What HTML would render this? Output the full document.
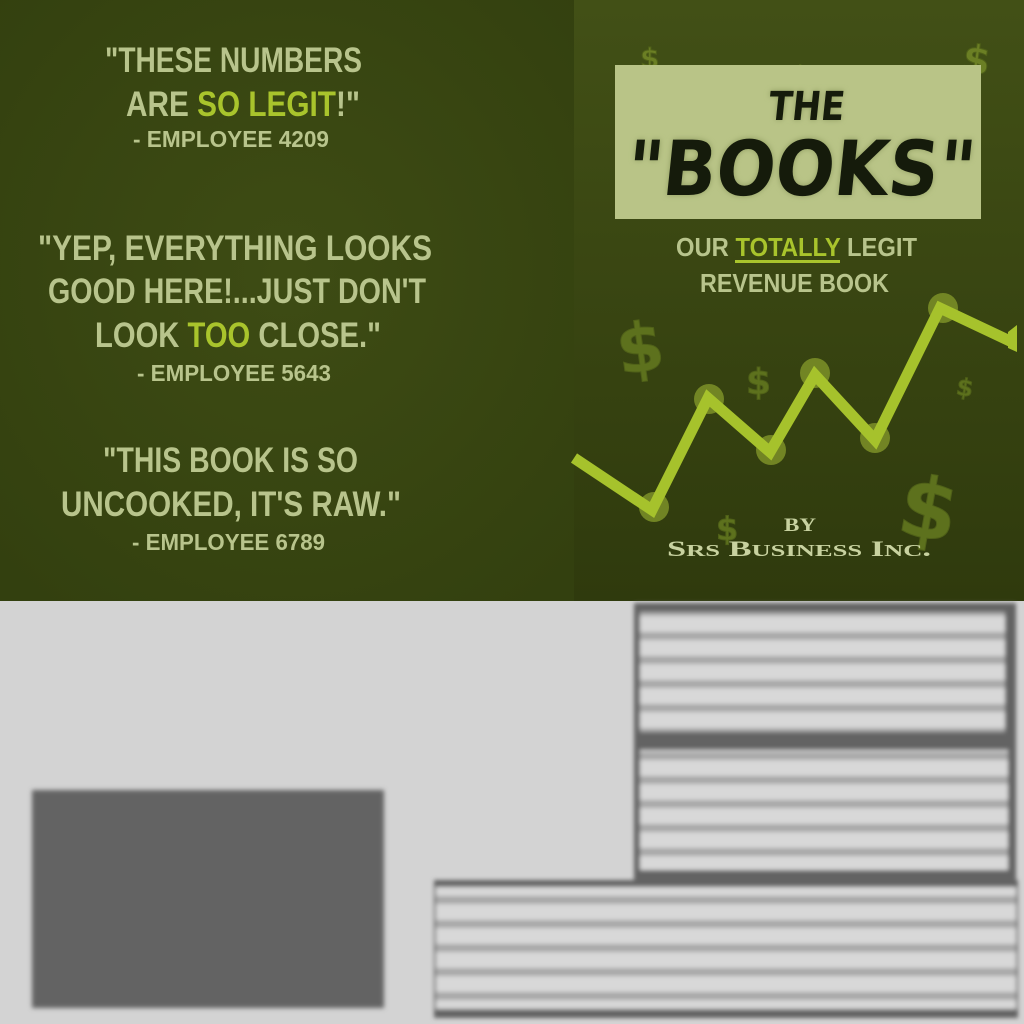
<!DOCTYPE html>
<html><head><meta charset="utf-8"><style>
html,body{margin:0;padding:0;background:#d3d3d3;}
svg{display:block}
</style></head><body>
<svg width="1024" height="1024" viewBox="0 0 1024 1024" xmlns="http://www.w3.org/2000/svg">
<defs>
<linearGradient id="g" x1="0" y1="0" x2="0" y2="1">
<stop offset="0" stop-color="#425016"/><stop offset="1" stop-color="#2f3a0d"/>
</linearGradient>
<radialGradient id="lg" cx="0.5" cy="0.45" r="0.7">
<stop offset="0" stop-color="#3e4c14"/><stop offset="1" stop-color="#33400f"/>
</radialGradient>
<filter id="b1"><feGaussianBlur stdDeviation="2.5"/></filter>
<filter id="b2"><feGaussianBlur stdDeviation="2"/></filter>
<filter id="glow"><feGaussianBlur stdDeviation="3"/></filter>
<pattern id="stripes" width="20" height="24" patternUnits="userSpaceOnUse">
<rect width="20" height="24" fill="#d8d8d8"/>
<rect y="8" width="20" height="8" fill="#a8a8a8"/>
</pattern>
</defs>
<rect width="1024" height="601" fill="url(#g)"/>
<rect width="574" height="601" fill="url(#lg)"/>
<rect x="0" y="601" width="1024" height="423" fill="#d3d3d3"/>

<g font-family="Liberation Sans, sans-serif" font-weight="bold" fill="#b8c48c">
<text x="105" y="72" font-size="35" textLength="257" lengthAdjust="spacingAndGlyphs">"THESE NUMBERS</text>
<text x="126" y="116" font-size="35" textLength="234" lengthAdjust="spacingAndGlyphs">ARE <tspan fill="#a9c42c">SO LEGIT</tspan>!"</text>
<text x="133" y="147" font-size="23" textLength="196" lengthAdjust="spacingAndGlyphs">- EMPLOYEE 4209</text>
<text x="38" y="260" font-size="35" textLength="394" lengthAdjust="spacingAndGlyphs">"YEP, EVERYTHING LOOKS</text>
<text x="48" y="303" font-size="35" textLength="378" lengthAdjust="spacingAndGlyphs">GOOD HERE!...JUST DON'T</text>
<text x="95" y="347" font-size="35" textLength="286" lengthAdjust="spacingAndGlyphs">LOOK <tspan fill="#a9c42c">TOO</tspan> CLOSE."</text>
<text x="137" y="381" font-size="23" textLength="194" lengthAdjust="spacingAndGlyphs">- EMPLOYEE 5643</text>
<text x="103" y="472" font-size="35" textLength="255" lengthAdjust="spacingAndGlyphs">"THIS BOOK IS SO</text>
<text x="61" y="516" font-size="35" textLength="340" lengthAdjust="spacingAndGlyphs">UNCOOKED, IT'S RAW."</text>
<text x="132" y="550" font-size="23" textLength="193" lengthAdjust="spacingAndGlyphs">- EMPLOYEE 6789</text>
</g>

<g font-family="DejaVu Sans, sans-serif" font-weight="bold" fill="#5d711d" stroke="#4f6018" stroke-width="1">
<text x="616" y="372" font-size="68" transform="rotate(-8 637 345)">$</text>
<text x="746" y="394" font-size="36">$</text>
<text x="957" y="396" font-size="24" transform="rotate(10 966 385)">$</text>
<text x="640" y="68" font-size="28" fill="#6b7f24">$</text>
<text x="795" y="76" font-size="15" fill="#6b7f24">$</text>
<text x="963" y="74" font-size="40" fill="#6b7f24" transform="rotate(8 978 57)">$</text>
<text x="716" y="540" font-size="32">$</text>
<text x="900" y="538" font-size="84" transform="rotate(10 928 505)">$</text>
</g>

<rect x="615" y="65" width="366" height="154" fill="#b9c487"/>
<g font-family="DejaVu Sans, Liberation Sans, sans-serif" font-weight="bold">
<text x="768" y="120" font-size="40" fill="#8f9c60" filter="url(#glow)" textLength="76" lengthAdjust="spacingAndGlyphs" transform="skewX(-6) translate(12 0)">THE</text>
<text x="768" y="120" font-size="40" fill="#151b0b" textLength="76" lengthAdjust="spacingAndGlyphs" transform="skewX(-6) translate(12 0)">THE</text>
<text x="625" y="195" font-size="76" fill="#8f9c60" filter="url(#glow)" textLength="348" lengthAdjust="spacingAndGlyphs" transform="skewX(-6) translate(20 0)">"BOOKS"</text>
<text x="625" y="195" font-size="76" fill="#151b0b" textLength="348" lengthAdjust="spacingAndGlyphs" transform="skewX(-6) translate(20 0)">"BOOKS"</text>
</g>
<g font-family="Liberation Sans, sans-serif" font-weight="bold" fill="#b8c48c">
<text x="676" y="256" font-size="26" textLength="241" lengthAdjust="spacingAndGlyphs">OUR <tspan fill="#a9c42c">TOTALLY</tspan> LEGIT</text>
<rect x="735" y="260" width="105" height="3" fill="#a9c42c"/>
<text x="700" y="292" font-size="26" textLength="189" lengthAdjust="spacingAndGlyphs">REVENUE BOOK</text>
</g>

<g fill="#7d9128" opacity="0.85">
<circle cx="654" cy="507" r="15"/><circle cx="709" cy="399" r="15"/>
<circle cx="771" cy="450" r="15"/><circle cx="815" cy="373" r="15"/>
<circle cx="875" cy="438" r="15"/><circle cx="943" cy="308" r="15"/>
</g>
<polyline points="574,458 652,510 708,398 770,452 815,375 875,440 940,308 1012,342" fill="none" stroke="#a6c22c" stroke-width="11" stroke-linejoin="miter"/>
<polygon points="1008,332 1017,325 1017,352 1008,348" fill="#a6c22c"/>

<g font-family="Liberation Serif, serif" font-weight="bold" fill="#c8d2a0">
<text x="784" y="531" font-size="19" textLength="32" lengthAdjust="spacingAndGlyphs">BY</text>
<text x="667" y="556" font-size="22" textLength="264" lengthAdjust="spacingAndGlyphs">S<tspan font-size="17">RS</tspan> B<tspan font-size="17">USINESS</tspan> I<tspan font-size="17">NC</tspan>.</text>
</g>

<g filter="url(#b2)">
<rect x="634" y="603" width="382" height="282" fill="#646464"/>
<rect x="640" y="612" width="365" height="120" fill="url(#stripes)"/>
<rect x="640" y="750" width="368" height="120" fill="url(#stripes)"/>
<rect x="434" y="880" width="584" height="138" fill="#646464"/>
<rect x="436" y="887" width="580" height="122" fill="url(#stripes)"/>
</g>
<rect x="32" y="790" width="352" height="218" fill="#646464" filter="url(#b1)"/>
</svg>
</body></html>
